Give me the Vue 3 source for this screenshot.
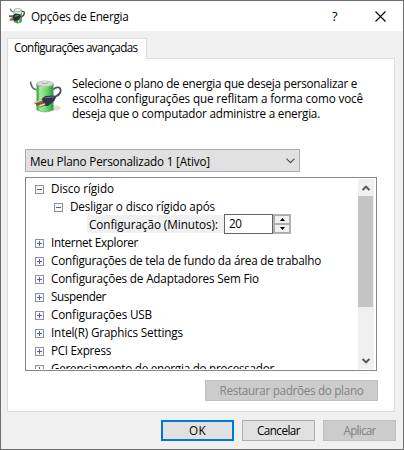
<script setup>
const description = [
  { text: 'Selecione o plano de energia que deseja personalizar e', width: 285 },
  { text: 'escolha configurações que reflitam a forma como você', width: 291 },
  { text: 'deseja que o computador administre a energia.', width: 248 },
]

const rows = [
  { text: 'Disco rígido', width: 63, level: 0, open: true },
  { text: 'Desligar o disco rígido após', width: 145, level: 1, open: true },
  { text: 'Configuração (Minutos):', width: 129, level: 2, value: '20' },
  { text: 'Internet Explorer', width: 87, level: 0 },
  { text: 'Configurações de tela de fundo da área de trabalho', width: 270, level: 0 },
  { text: 'Configurações de Adaptadores Sem Fio', width: 208, level: 0 },
  { text: 'Suspender', width: 55, level: 0 },
  { text: 'Configurações USB', width: 101, level: 0 },
  { text: 'Intel(R) Graphics Settings', width: 132, level: 0 },
  { text: 'PCI Express', width: 60, level: 0 },
  { text: 'Gerenciamento de energia do processador', width: 223, level: 0 },
]

// Tracks a label so that it takes the given width in pixels.
const vFit = {
  mounted(el, { value }) {
    const natural = el.getBoundingClientRect().width
    el.style.letterSpacing = (value - natural) / el.textContent.length + 'px'
  },
}
</script>

<template>
  <div class="window">
    <svg width="0" height="0" class="defs">
      <defs>
        <linearGradient id="cell" x1="0" x2="1" y1="0" y2="0">
          <stop offset="0" stop-color="#3fa648" />
          <stop offset=".3" stop-color="#98e894" />
          <stop offset=".65" stop-color="#62d566" />
          <stop offset="1" stop-color="#2c9a3b" />
        </linearGradient>
        <linearGradient id="cap" x1="0" x2="1" y1="0" y2="0">
          <stop offset="0" stop-color="#8b938d" />
          <stop offset=".4" stop-color="#f4f6f4" />
          <stop offset="1" stop-color="#7e8780" />
        </linearGradient>
      </defs>
    </svg>

    <header class="titlebar">
      <svg class="app-icon" width="16" height="16" viewBox="0 0 16 16">
        <path d="M1.2 .6Q1.5 3 4.5 4.2" fill="none" stroke="#5d6472" stroke-width="1.2" />
        <path d="M12.5 3.4Q16 3 15.2 5.8T11.5 9" fill="none" stroke="#3d424e" stroke-width="1.3" />
        <path d="M5 2V13.8Q8.8 16.6 12.5 13.8V2Z" fill="#2fa548" stroke="#4f7a58" stroke-width=".6" />
        <path d="M5.2 2V6H12.3V2Z" fill="#c9ecd0" />
        <path d="M9.7 6V14.5" stroke="#9aeea0" stroke-width="1.6" />
        <ellipse cx="8.8" cy="2" rx="3.7" ry="1.5" fill="#f2f5f2" stroke="#8d968f" stroke-width=".7" />
        <path d="M3.8 7.4 6.5 5.6 11 6.4 11.8 8.6 9.8 12 6.2 13 3.6 11.6Z" fill="#292c33" />
        <path d="M5.5 8.2 9.5 7.5" stroke="#8b909b" stroke-width="1" />
        <path d="M.2 8 4.2 8.5M.8 11.8 4.6 11.2" stroke="#3d3932" stroke-width="2" />
        <path d="M.2 7.7 3.7 8.1M.8 11.4 4.2 10.9" stroke="#cbb078" stroke-width=".8" />
      </svg>
      <span v-fit="97.5" class="title">Opções de Energia</span>
      <span class="spacer"></span>
      <span class="help">?</span>
      <svg class="close" width="11" height="11" viewBox="0 0 11 11">
        <path d="M.5 .5 10.5 10.5M10.5 .5 .5 10.5" stroke="#000" stroke-width="1.1" />
      </svg>
    </header>

    <main class="content">
      <div class="tab"><span v-fit="123.5">Configurações avançadas</span></div>

      <section class="panel">
        <div class="intro">
          <svg width="34" height="34" viewBox="0 0 34 34">
            <ellipse cx="23" cy="28" rx="9" ry="3" fill="#000" opacity=".13" />
            <path d="M1.5 1.5Q2 8.5 7.5 9.8" fill="none" stroke="#5b647c" stroke-width="1.6" />
            <path d="M24 9.8C27 6 32.5 6.5 31.5 11.5S27 15 24.5 18" fill="none" stroke="#454d66" stroke-width="1.8" />
            <path d="M7.8 4V30Q16 34 24.2 30V4Z" fill="url(#cell)" stroke="#49a553" stroke-width=".5" />
            <path d="M11 7V30" stroke="#d6fbd2" stroke-width="1.6" opacity=".6" />
            <path d="M7.5 3.8V5.6Q16 8.8 24.4 5.6V3.8Z" fill="url(#cap)" />
            <ellipse cx="16" cy="3.8" rx="8.4" ry="2.6" fill="#d9dedb" stroke="#8c958f" stroke-width=".5" />
            <path d="M13 2V3.4Q16 4.8 19.2 3.4V2Z" fill="#b0b7b2" />
            <ellipse cx="16.1" cy="2" rx="3.1" ry="1.1" fill="#f4f6f4" stroke="#98a09a" stroke-width=".4" />
            <path d="M12.8 18.8 16.3 16 25 15.6 27 17.4 25.3 21 18.6 26.2 15 25.2Z" fill="#30354a" />
            <path d="M16 17.8 25 16.9" stroke="#737b96" stroke-width="1" />
            <path d="M5.5 23.3 13.5 20M10.5 26.8 16.2 24.2M7.2 25 14.5 22.2" stroke="#76542f" stroke-width="2" />
            <path d="M5.5 22.9 13 19.8M10.5 26.4 16 23.9" stroke="#f3d7a6" stroke-width="1.3" />
          </svg>
          <p class="description">
            <span v-for="line in description" :key="line.text" v-fit="line.width">{{ line.text }}</span>
          </p>
        </div>

        <div class="select">
          <span v-fit="180">Meu Plano Personalizado 1 [Ativo]</span>
          <svg width="9" height="6" viewBox="0 0 9 6">
            <path d="M.5 .7 4.5 4.7 8.5 .7" fill="none" stroke="#505050" stroke-width="1.2" />
          </svg>
        </div>

        <div class="tree">
          <div class="rows">
            <div v-for="row in rows" :key="row.text" class="row" :class="'level-' + row.level">
              <svg v-if="row.level < 2" class="toggle" width="9" height="9" viewBox="0 0 9 9">
                <rect x=".5" y=".5" width="8" height="8" fill="#f7f7f7" stroke="#919191" />
                <path d="M2 4.5H7" stroke="#4b63a7" />
                <path v-if="!row.open" d="M4.5 2V7" stroke="#4b63a7" />
              </svg>
              <span class="label"><span v-fit="row.width">{{ row.text }}</span></span>
              <div v-if="row.value" class="number">
                <span class="field"><span v-fit="12.5">{{ row.value }}</span></span>
                <span class="spinner">
                  <i><svg width="5" height="3" viewBox="0 0 5 3"><path d="M0 3 2.5 0 5 3Z" /></svg></i>
                  <i><svg width="5" height="3" viewBox="0 0 5 3"><path d="M0 0 2.5 3 5 0Z" /></svg></i>
                </span>
              </div>
            </div>
          </div>
          <div class="scrollbar">
            <span class="arrow">
              <svg width="8" height="6" viewBox="0 0 8 6"><path d="M.6 5 4 1.6 7.4 5" fill="none" stroke="#555" stroke-width="2" /></svg>
            </span>
            <span class="thumb"></span>
            <span class="spacer"></span>
            <span class="arrow">
              <svg width="8" height="6" viewBox="0 0 8 6"><path d="M.6 1 4 4.4 7.4 1" fill="none" stroke="#555" stroke-width="2" /></svg>
            </span>
          </div>
        </div>

        <button class="button restore" disabled><span v-fit="144">Restaurar padrões do plano</span></button>
      </section>

      <footer class="actions">
        <button class="button primary"><span v-fit="17">OK</span></button>
        <button class="button"><span v-fit="43">Cancelar</span></button>
        <button class="button" disabled><span v-fit="32">Aplicar</span></button>
      </footer>
    </main>
  </div>
</template>

<style>
body {
  margin: 0;
  overflow: hidden;
}
</style>

<style scoped>
* {
  box-sizing: border-box;
}
.window {
  display: flex;
  flex-direction: column;
  width: 404px;
  height: 450px;
  border: 1px solid #6e6e6e;
  background: #f0f0f0;
  color: #000;
  font: 11.7px/15px "Open Sans", "Noto Sans", sans-serif;
  white-space: nowrap;
}
.defs {
  position: absolute;
}
.titlebar {
  display: flex;
  align-items: center;
  height: 30px;
  padding: 0 17px 0 8px;
  background: #fff;
}
.title {
  margin-left: 6px;
}
.spacer {
  flex: 1;
}
.help {
  width: 6px;
  margin-right: 37px;
  font-size: 13px;
}
.content {
  display: flex;
  flex-direction: column;
  padding: 7px 6px 0;
}
.tab {
  z-index: 1;
  width: 140px;
  height: 21px;
  padding: 1px 0 0 6px;
  border: 1px solid #dcdcdc;
  border-bottom: 0;
  background: #fff;
}
.panel {
  display: flex;
  flex-direction: column;
  width: 388px;
  height: 354px;
  margin-top: -1px;
  padding: 17px 17px 0;
  border: 1px solid #dcdcdc;
  background: #fff;
}
.intro {
  display: flex;
  height: 73px;
  padding: 4px 0 0 4px;
}
.description {
  display: flex;
  flex-direction: column;
  align-items: flex-start;
  margin: -4px 0 0 9px;
}
.select {
  display: flex;
  align-items: center;
  justify-content: space-between;
  width: 275px;
  height: 23px;
  padding: 0 4px;
  border: 1px solid #adadad;
  background: #e1e1e1;
}
.select span {
  padding-top: 1px;
}
.tree {
  display: flex;
  flex: none;
  width: 352px;
  height: 194px;
  margin-top: 5px;
  padding: 1px;
  border: 1px solid #828790;
}
.rows {
  flex: 1;
  overflow: hidden;
}
.row {
  display: flex;
  align-items: center;
  height: 18px;
  padding-left: 8px;
}
.level-1 {
  padding-left: 27px;
}
.level-2 {
  padding-left: 60px;
}
.toggle {
  margin: 2px 5px 0 0;
}
.label {
  height: 18px;
  padding: 2px 2px 0;
}
.level-2 .label {
  width: 137px;
  background: #f0f0f0;
}
.number {
  display: flex;
  flex: none;
  height: 20px;
}
.field {
  width: 49px;
  padding: 1px 0 0 4px;
  border: 1px solid #646464;
  background: #fff;
}
.spinner {
  display: flex;
  flex-direction: column;
  width: 18px;
  border: 1px solid #b4b4b4;
  background: #fff;
}
.spinner i {
  display: flex;
  align-items: center;
  justify-content: center;
  width: 16px;
  height: 9px;
  border: 1px solid #acacac;
  background: #f0f0f0;
}
.scrollbar {
  display: flex;
  flex-direction: column;
  width: 16px;
  margin-right: 1px;
  background: #f0f0f0;
}
.arrow {
  display: flex;
  align-items: center;
  justify-content: center;
  height: 17px;
  padding-right: 1px;
}
.thumb {
  width: 15px;
  height: 111px;
  background: #c4c4c4;
}
.button {
  display: flex;
  align-items: center;
  justify-content: center;
  width: 73px;
  height: 21px;
  padding: 0;
  border: 1px solid #adadad;
  background: #e1e1e1;
  color: #000;
  font: inherit;
}
.button:disabled {
  border-color: #bfbfbf;
  background: #ccc;
  color: #838383;
}
.restore {
  width: 173px;
  align-self: flex-end;
  margin: 9px -1px 0 0;
}
.primary {
  border: 2px solid #0078d7;
}
.actions {
  display: flex;
  gap: 8px;
  margin-top: 8px;
  padding-left: 154px;
}
</style>
